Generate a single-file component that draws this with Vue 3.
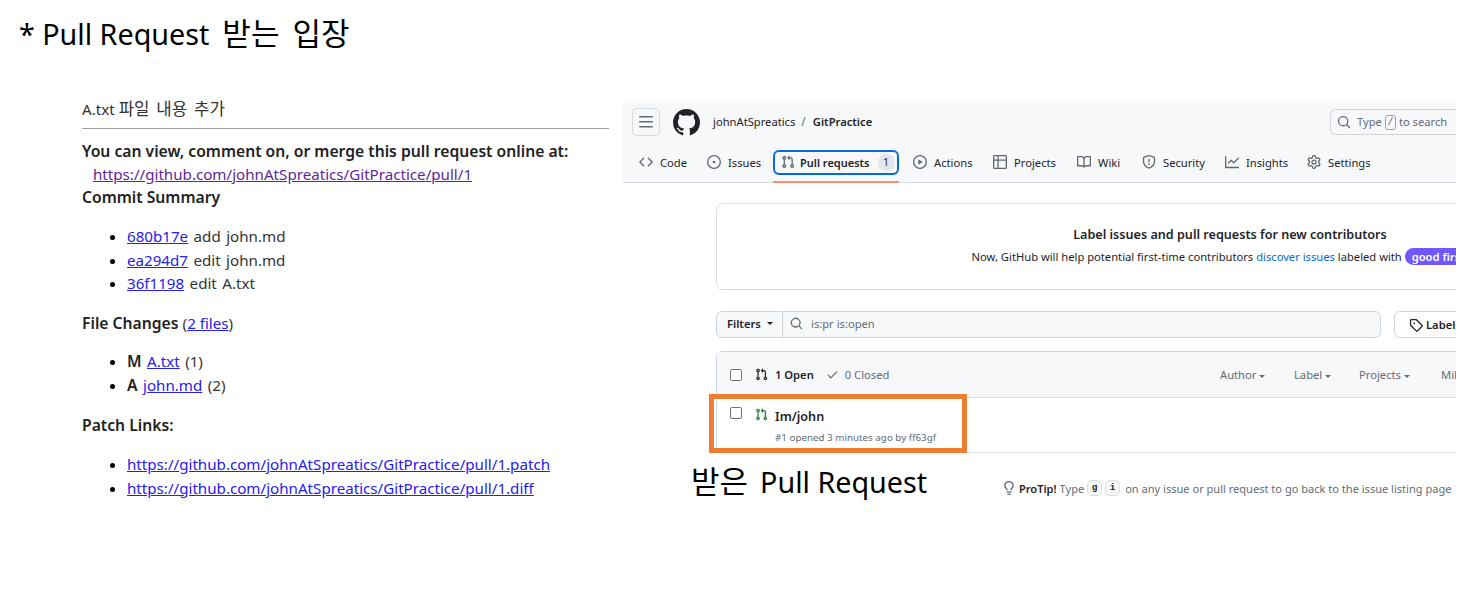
<script setup>
const commits = [
  { sha: '680b17e', msg: 'add john.md' },
  { sha: 'ea294d7', msg: 'edit john.md' },
  { sha: '36f1198', msg: 'edit A.txt' },
]
const files = [
  { s: 'M', name: 'A.txt', n: '(1)' },
  { s: 'A', name: 'john.md', n: '(2)' },
]
const patches = [
  'https://github.com/johnAtSpreatics/GitPractice/pull/1.patch',
  'https://github.com/johnAtSpreatics/GitPractice/pull/1.diff',
]
const prPath = 'M1.5 3.25a2.25 2.25 0 1 1 3 2.122v5.256a2.251 2.251 0 1 1-1.5 0V5.372A2.25 2.25 0 0 1 1.5 3.25Zm5.677-.177L9.573.677A.25.25 0 0 1 10 .854V2.5h1A2.5 2.5 0 0 1 13.5 5v5.628a2.251 2.251 0 1 1-1.5 0V5a1 1 0 0 0-1-1h-1v1.646a.25.25 0 0 1-.427.177L7.177 3.427a.25.25 0 0 1 0-.354ZM3.75 2.5a.75.75 0 1 0 0 1.5.75.75 0 0 0 0-1.5Zm0 9.5a.75.75 0 1 0 0 1.5.75.75 0 0 0 0-1.5Zm8.25.75a.75.75 0 1 0 1.5 0 .75.75 0 0 0-1.5 0Z'
</script>

<template>
  <div class="page">
    <h1 class="title"><span class="latin">* Pull Request</span> 받는 입장</h1>
    <div class="row">
      <section class="mail">
        <div class="subject">A.txt <span class="ko">파일 내용 추가</span></div>
        <p class="strong first">You can view, comment on, or merge this pull request online at:</p>
        <p class="url"><a class="visited">https://github.com/johnAtSpreatics/GitPractice/pull/1</a></p>
        <p class="strong">Commit Summary</p>
        <ul class="list commits">
          <li v-for="c in commits" :key="c.sha"><a>{{ c.sha }}</a> {{ c.msg }}</li>
        </ul>
        <p class="strong">File Changes <span class="normal">(<a>2 files</a>)</span></p>
        <ul class="list changes">
          <li v-for="f in files" :key="f.name"><b class="strong">{{ f.s }}</b> <a>{{ f.name }}</a> {{ f.n }}</li>
        </ul>
        <p class="strong">Patch Links:</p>
        <ul class="list patches">
          <li v-for="p in patches" :key="p"><a>{{ p }}</a></li>
        </ul>
      </section>

      <section class="gh">
        <header class="gh-head">
          <div class="top">
            <span class="burger"><svg width="16" height="16" viewBox="0 0 16 16"><path fill="#636c76" d="M1 2.75A.75.75 0 0 1 1.75 2h12.5a.75.75 0 0 1 0 1.5H1.75A.75.75 0 0 1 1 2.75Zm0 5A.75.75 0 0 1 1.75 7h12.5a.75.75 0 0 1 0 1.5H1.75A.75.75 0 0 1 1 7.75ZM1.75 12h12.5a.75.75 0 0 1 0 1.5H1.75a.75.75 0 0 1 0-1.5Z"/></svg></span>
            <svg class="logo" width="27" height="27" viewBox="0 0 16 16"><path fill="#1f2328" d="M8 0c4.42 0 8 3.58 8 8a8.013 8.013 0 0 1-5.45 7.59c-.4.08-.55-.17-.55-.38 0-.27.01-1.13.01-2.2 0-.75-.25-1.23-.54-1.48 1.78-.2 3.65-.88 3.65-3.95 0-.88-.31-1.59-.82-2.15.08-.2.36-1.02-.08-2.12 0 0-.67-.22-2.2.82-.64-.18-1.32-.27-2-.27-.68 0-1.36.09-2 .27-1.53-1.03-2.2-.82-2.2-.82-.44 1.1-.16 1.92-.08 2.12-.51.56-.82 1.28-.82 2.15 0 3.06 1.86 3.75 3.64 3.95-.23.2-.44.55-.51 1.07-.46.21-1.61.55-2.33-.66-.15-.24-.6-.83-1.23-.82-.67.01-.27.38.01.53.34.19.73.9.82 1.13.16.45.68 1.31 2.69.94 0 .67.01 1.3.01 1.49 0 .21-.15.45-.55.38A7.995 7.995 0 0 1 0 8c0-4.42 3.58-8 8-8Z"/></svg>
            <span class="crumb owner">johnAtSpreatics</span><span class="crumb slash">/</span><b class="crumb repo">GitPractice</b>
            <div class="search">
              <svg width="14" height="14" viewBox="0 0 16 16"><path fill="#636c76" d="M10.68 11.74a6 6 0 0 1-7.922-8.982 6 6 0 0 1 8.982 7.922l3.04 3.04a.749.749 0 1 1-1.06 1.06ZM11.5 7a4.499 4.499 0 1 0-8.997 0A4.499 4.499 0 0 0 11.5 7Z"/></svg>
              <span>Type</span><kbd>/</kbd><span>to search</span>
            </div>
          </div>
          <nav class="tabs">
            <span class="tab t-code"><svg width="14" height="14" viewBox="0 0 16 16"><path d="m11.28 3.22 4.25 4.25a.75.75 0 0 1 0 1.06l-4.25 4.25a.749.749 0 1 1-1.06-1.06L13.94 8l-3.72-3.72a.749.749 0 1 1 1.06-1.06Zm-6.56 0a.751.751 0 0 1 1.06 1.06L2.06 8l3.72 3.72a.749.749 0 1 1-1.06 1.06L.47 8.53a.75.75 0 0 1 0-1.06Z"/></svg>Code</span>
            <span class="tab t-issues"><svg width="14" height="14" viewBox="0 0 16 16"><path d="M8 9.5a1.5 1.5 0 1 0 0-3 1.5 1.5 0 0 0 0 3Z"/><path d="M8 0a8 8 0 1 1 0 16A8 8 0 0 1 8 0ZM1.5 8a6.5 6.5 0 1 0 13 0 6.5 6.5 0 0 0-13 0Z"/></svg>Issues</span>
            <span class="tab-wrap">
              <span class="tab active"><svg width="14" height="14" viewBox="0 0 16 16"><path :d="prPath"/></svg><b>Pull requests</b><i class="count">1</i></span>
            </span>
            <span class="tab t-actions"><svg width="14" height="14" viewBox="0 0 16 16"><path d="M8 0a8 8 0 1 1 0 16A8 8 0 0 1 8 0ZM1.5 8a6.5 6.5 0 1 0 13 0 6.5 6.5 0 0 0-13 0Zm4.879-2.773 4.264 2.559a.25.25 0 0 1 0 .428l-4.264 2.559A.25.25 0 0 1 6 10.559V5.442a.25.25 0 0 1 .379-.215Z"/></svg>Actions</span>
            <span class="tab t-projects"><svg width="14" height="14" viewBox="0 0 16 16"><path d="M0 1.75C0 .784.784 0 1.75 0h12.5C15.216 0 16 .784 16 1.75v12.5A1.75 1.75 0 0 1 14.25 16H1.75A1.75 1.75 0 0 1 0 14.25ZM6.5 6.5v8h7.75a.25.25 0 0 0 .25-.25V6.5Zm8-1.5V1.75a.25.25 0 0 0-.25-.25H6.5V5Zm-13 1.5v7.75c0 .138.112.25.25.25H5v-8ZM5 5V1.5H1.75a.25.25 0 0 0-.25.25V5Z"/></svg>Projects</span>
            <span class="tab t-wiki"><svg width="14" height="14" viewBox="0 0 16 16"><path d="M0 1.75A.75.75 0 0 1 .75 1h4.253c1.227 0 2.317.59 3 1.501A3.743 3.743 0 0 1 11.006 1h4.245a.75.75 0 0 1 .75.75v10.5a.75.75 0 0 1-.75.75h-4.507a2.25 2.25 0 0 0-1.591.659l-.622.621a.75.75 0 0 1-1.06 0l-.622-.621A2.25 2.25 0 0 0 5.258 13H.75a.75.75 0 0 1-.75-.75Zm7.251 10.324.004-5.073-.002-2.253A2.25 2.25 0 0 0 5.003 2.5H1.5v9h3.757a3.75 3.75 0 0 1 1.994.574ZM8.755 4.75l-.004 7.322a3.752 3.752 0 0 1 1.992-.572H14.5v-9h-3.495a2.25 2.25 0 0 0-2.25 2.25Z"/></svg>Wiki</span>
            <span class="tab t-security"><svg width="14" height="14" viewBox="0 0 16 16"><path d="M7.467.133a1.748 1.748 0 0 1 1.066 0l5.25 1.68A1.75 1.75 0 0 1 15 3.48V7c0 1.566-.32 3.182-1.303 4.682-.983 1.498-2.585 2.813-5.032 3.855a1.697 1.697 0 0 1-1.33 0c-2.447-1.042-4.049-2.357-5.032-3.855C1.32 10.182 1 8.566 1 7V3.48a1.75 1.75 0 0 1 1.217-1.667Zm.61 1.429a.25.25 0 0 0-.153 0l-5.25 1.68a.25.25 0 0 0-.174.238V7c0 1.358.275 2.666 1.057 3.86.784 1.194 2.121 2.34 4.366 3.297a.196.196 0 0 0 .154 0c2.245-.956 3.582-2.104 4.366-3.298C13.225 9.666 13.5 8.36 13.5 7V3.48a.251.251 0 0 0-.174-.237l-5.25-1.68ZM8.75 4.75v3a.75.75 0 0 1-1.5 0v-3a.75.75 0 0 1 1.5 0ZM9 10.5a1 1 0 1 1-2 0 1 1 0 0 1 2 0Z"/></svg>Security</span>
            <span class="tab t-insights"><svg width="14" height="14" viewBox="0 0 16 16"><path d="M1.5 1.75V13.5h13.75a.75.75 0 0 1 0 1.5H.75a.75.75 0 0 1-.75-.75V1.75a.75.75 0 0 1 1.5 0Zm14.28 2.53-5.25 5.25a.75.75 0 0 1-1.06 0L7 7.06 4.28 9.78a.751.751 0 0 1-1.06-1.06l3.25-3.25a.75.75 0 0 1 1.06 0L10 7.94l4.72-4.72a.751.751 0 0 1 1.06 1.06Z"/></svg>Insights</span>
            <span class="tab t-settings"><svg width="14" height="14" viewBox="0 0 16 16"><path d="M8 0a8.2 8.2 0 0 1 .701.031C9.444.095 9.99.645 10.16 1.29l.288 1.107c.018.066.079.158.212.224.231.114.454.243.668.386.123.082.233.09.299.071l1.103-.303c.644-.176 1.392.021 1.82.63.27.385.506.792.704 1.218.315.675.111 1.422-.364 1.891l-.814.806c-.049.048-.098.147-.088.294.016.257.016.515 0 .772-.01.147.038.246.088.294l.814.806c.475.469.679 1.216.364 1.891a7.977 7.977 0 0 1-.704 1.217c-.428.61-1.176.807-1.82.63l-1.102-.302c-.067-.019-.177-.011-.3.071a5.909 5.909 0 0 1-.668.386c-.133.066-.194.158-.211.224l-.29 1.106c-.168.646-.715 1.196-1.458 1.26a8.006 8.006 0 0 1-1.402 0c-.743-.064-1.289-.614-1.458-1.26l-.289-1.106c-.018-.066-.079-.158-.212-.224a5.738 5.738 0 0 1-.668-.386c-.123-.082-.233-.09-.299-.071l-1.103.303c-.644.176-1.392-.021-1.82-.63a8.12 8.12 0 0 1-.704-1.218c-.315-.675-.111-1.422.363-1.891l.815-.806c.05-.048.098-.147.088-.294a6.214 6.214 0 0 1 0-.772c.01-.147-.038-.246-.088-.294l-.815-.806C.635 6.045.431 5.298.746 4.623a7.92 7.92 0 0 1 .704-1.217c.428-.61 1.176-.807 1.82-.63l1.102.302c.067.019.177.011.3-.071.214-.143.437-.272.668-.386.133-.066.194-.158.211-.224l.29-1.106C6.009.645 6.556.095 7.299.03 7.53.01 7.764 0 8 0Zm-.571 1.525c-.036.003-.108.036-.137.146l-.289 1.105c-.147.561-.549.967-.998 1.189-.173.086-.34.183-.5.29-.417.278-.97.423-1.529.27l-1.103-.303c-.109-.03-.175.016-.195.045-.22.312-.412.644-.573.99-.014.031-.021.11.059.19l.815.806c.411.406.562.957.53 1.456a4.709 4.709 0 0 0 0 .582c.032.499-.119 1.05-.53 1.456l-.815.806c-.081.08-.073.159-.059.19.162.346.353.677.573.989.02.03.085.076.195.046l1.102-.303c.56-.153 1.113-.008 1.53.27.161.107.328.204.501.29.447.222.85.629.997 1.189l.289 1.105c.029.109.101.143.137.146a6.6 6.6 0 0 0 1.142 0c.036-.003.108-.036.137-.146l.289-1.105c.147-.561.549-.967.998-1.189.173-.086.34-.183.5-.29.417-.278.97-.423 1.529-.27l1.103.303c.109.029.175-.016.195-.045.22-.313.411-.644.573-.99.014-.031.021-.11-.059-.19l-.815-.806c-.411-.406-.562-.957-.53-1.456a4.709 4.709 0 0 0 0-.582c-.032-.499.119-1.05.53-1.456l.815-.806c.081-.08.073-.159.059-.19a6.464 6.464 0 0 0-.573-.989c-.02-.03-.085-.076-.195-.046l-1.102.303c-.56.153-1.113.008-1.53-.27a4.44 4.44 0 0 0-.501-.29c-.447-.222-.85-.629-.997-1.189l-.289-1.105c-.029-.11-.101-.143-.137-.146a6.6 6.6 0 0 0-1.142 0ZM11 8a3 3 0 1 1-6 0 3 3 0 0 1 6 0ZM9.5 8a1.5 1.5 0 1 0-3.001.001A1.5 1.5 0 0 0 9.5 8Z"/></svg>Settings</span>
          </nav>
        </header>

        <div class="gh-body">
          <div class="banner">
            <b>Label issues and pull requests for new contributors</b>
            <p>Now, GitHub will help potential first-time contributors <a>discover issues</a> labeled with <span class="pill">good first issue</span></p>
          </div>

          <div class="filters">
            <span class="filter-btn">Filters<i class="caret"></i></span>
            <div class="filter-input">
              <svg width="13" height="13" viewBox="0 0 16 16"><path fill="#636c76" d="M10.68 11.74a6 6 0 0 1-7.922-8.982 6 6 0 0 1 8.982 7.922l3.04 3.04a.749.749 0 1 1-1.06 1.06ZM11.5 7a4.499 4.499 0 1 0-8.997 0A4.499 4.499 0 0 0 11.5 7Z"/></svg>
              is:pr is:open
            </div>
            <span class="labels"><svg width="14" height="14" viewBox="0 0 16 16"><path fill="#1f2328" d="M1 7.775V2.75C1 1.784 1.784 1 2.75 1h5.025c.464 0 .91.184 1.238.513l6.25 6.25a1.75 1.75 0 0 1 0 2.474l-5.026 5.026a1.75 1.75 0 0 1-2.474 0l-6.25-6.25A1.752 1.752 0 0 1 1 7.775Zm1.5 0c0 .066.026.13.073.177l6.25 6.25a.25.25 0 0 0 .354 0l5.025-5.025a.25.25 0 0 0 0-.354l-6.25-6.25a.25.25 0 0 0-.177-.073H2.75a.25.25 0 0 0-.25.25ZM6 5a1 1 0 1 1 0 2 1 1 0 0 1 0-2Z"/></svg>Labels</span>
          </div>

          <div class="issues">
            <div class="issues-head">
              <i class="check"></i>
              <svg class="pr-ico" width="13" height="13" viewBox="0 0 16 16"><path fill="#1f2328" :d="prPath"/></svg>
              <b class="open">1 Open</b>
              <svg class="tick" width="13" height="13" viewBox="0 0 16 16"><path fill="#636c76" d="M13.78 4.22a.75.75 0 0 1 0 1.06l-7.25 7.25a.75.75 0 0 1-1.06 0L2.22 9.28a.751.751 0 0 1 1.06-1.06L6 10.94l6.72-6.72a.75.75 0 0 1 1.06 0Z"/></svg>
              <span class="closed">0 Closed</span>
              <span class="menus">
                <span class="m-author">Author<i class="caret"></i></span>
                <span class="m-label">Label<i class="caret"></i></span>
                <span class="m-projects">Projects<i class="caret"></i></span>
                <span>Milestones</span>
              </span>
            </div>
            <div class="issue">
              <i class="check"></i>
              <svg class="pr-ico" width="13" height="13" viewBox="0 0 16 16"><path fill="#1a7f37" :d="prPath"/></svg>
              <div class="issue-text">
                <b>Im/john</b>
                <small>#1 opened 3 minutes ago by ff63gf</small>
              </div>
            </div>
          </div>

          <div class="protip">
            <svg width="14" height="14" viewBox="0 0 16 16"><path fill="#636c76" d="M8 1.5c-2.363 0-4 1.69-4 3.75 0 .984.424 1.625.984 2.304l.214.253c.223.264.47.556.673.848.284.411.537.896.621 1.49a.75.75 0 0 1-1.484.211c-.04-.282-.163-.547-.37-.847a8.456 8.456 0 0 0-.542-.68c-.084-.1-.173-.205-.268-.32C3.201 7.75 2.5 6.766 2.5 5.25 2.5 2.31 4.863 0 8 0s5.5 2.31 5.5 5.25c0 1.516-.701 2.5-1.328 3.259-.095.115-.184.22-.268.319-.207.245-.383.453-.541.681-.208.3-.33.565-.37.847a.751.751 0 0 1-1.485-.212c.084-.593.337-1.078.621-1.489.203-.292.45-.584.673-.848.075-.088.147-.173.213-.253.561-.679.985-1.32.985-2.304 0-2.06-1.637-3.75-4-3.75ZM5.75 12h4.5a.75.75 0 0 1 0 1.5h-4.5a.75.75 0 0 1 0-1.5ZM6 15.25a.75.75 0 0 1 .75-.75h2.5a.75.75 0 0 1 0 1.5h-2.5a.75.75 0 0 1-.75-.75Z"/></svg>
            <b>ProTip!</b><span>Type</span><kbd>g</kbd><kbd>i</kbd><span class="tip-end">on any issue or pull request to go back to the issue listing page</span>
          </div>
        </div>
      </section>
    </div>

    <div class="callout-box"></div>
    <div class="callout-text">받은 <span class="latin">Pull Request</span></div>
  </div>
</template>

<style>
html, body { margin: 0; background: #fff; }
</style>

<style scoped>
.page {
  position: relative;
  width: 1477px;
  height: 602px;
  overflow: hidden;
  background: #fff;
  font-family: "Noto Sans", "Noto Sans CJK KR", sans-serif;
}
.title {
  margin: 0;
  height: 100px;
  box-sizing: border-box;
  padding: 11px 0 0 19px;
  font-weight: 400;
  font-size: 31px;
  line-height: 44px;
  word-spacing: 5px;
  color: #000;
}
.latin { font-size: 28.7px; word-spacing: 0; }
.row { display: flex; padding-left: 82px; }

/* mail */
.mail { width: 527px; margin-right: 14px; font-size: 15.15px; color: #333; flex: none; }
.subject { height: 28px; line-height: 18px; border-bottom: 1px solid #a0a0a0; margin-bottom: 11px; }
.ko { font-size: 16.8px; word-spacing: 2.5px; }
.mail p { margin: 0; height: 23px; line-height: 23px; white-space: nowrap; }
.strong { font-weight: 600; color: #222; font-size: 15.7px; }
.normal { font-weight: 400; color: #333; font-size: 15.15px; }
.url { padding-left: 11px; }
.mail a { color: #2620ee; text-decoration: underline; }
.mail a.visited { color: #60279c; }
.list { padding: 0 0 0 45px; word-spacing: 1.5px; }
.commits { margin: 16px 0 16px; }
.changes { margin: 15px 0 17px; }
.patches { margin: 15.5px 0 0; }
.list li { height: 23.7px; line-height: 23.7px; white-space: nowrap; }
.list li::marker { color: #000; }

/* github */
.gh { width: 833px; flex: none; overflow: hidden; font-size: 11.2px; color: #1f2328; }
.gh-head { height: 82px; background: #f6f8fa; border-bottom: 1px solid #d8dee4; position: relative; }
.top { height: 44px; display: flex; align-items: center; padding: 0 0 0 9px; }
.burger { width: 26px; height: 26px; border: 1px solid #d5dae0; border-radius: 5px; display: flex; align-items: center; justify-content: center; }
.logo { margin-left: 13px; margin-right: 13px; }
.crumb { padding-bottom: 2px; }
.slash { margin: 0 7px 0 6px; color: #636c76; font-size: 12px; }
.repo { font-weight: 600; }
.search {
  margin-left: auto; width: 126px; height: 26px; box-sizing: border-box;
  border: 1px solid #d0d7de; border-right: 0; border-radius: 6px 0 0 6px;
  display: flex; align-items: center; gap: 3px; padding-left: 6px; color: #636c76;
}
.search span { padding-bottom: 2px; }
.search svg { margin-right: 3px; }
kbd { font-family: "Liberation Mono", monospace; }
.search kbd { border: 1px solid #9aa3ac; border-radius: 3px; width: 9px; height: 13px; font-size: 10px; line-height: 13px; text-align: center; }
.tabs { display: flex; align-items: center; height: 38px; box-sizing: border-box; padding: 0 0 2px 16px; color: #1f2328; }
.tab { display: inline-flex; align-items: center; gap: 7px; white-space: nowrap; }
.tab svg { fill: #5f6873; flex: none; }
.t-code { width: 68px; }
.t-issues { width: 66px; }
.tab-wrap { position: relative; width: 140px; height: 36px; display: flex; align-items: center; }
.tab-wrap::after { content: ""; position: absolute; left: 0; right: 14px; bottom: -3px; height: 2px; background: #fd8c73; }
.tab.active { width: 126px; height: 25px; box-sizing: border-box; border: 2px solid #0969da; border-radius: 6px; padding-left: 6px; gap: 5px; }
.tab.active b { font-weight: 600; font-size: 11px; }
.count { width: 17px; height: 17px; margin-left: 3px; background: #e3e7eb; border-radius: 50%; font-style: normal; font-size: 10.5px; line-height: 17px; text-align: center; }
.t-actions { width: 80px; }
.t-projects { width: 84px; }
.t-wiki { width: 65px; }
.t-security { width: 83px; }
.t-insights { width: 82px; }

.gh-body { padding: 20px 0 0 93px; width: 1200px; box-sizing: border-box; }
.banner {
  width: 1028px; height: 87px; box-sizing: border-box;
  border: 1px solid #d8dee4; border-radius: 6px;
  text-align: center; padding-top: 20px; white-space: nowrap;
}
.banner b { display: block; font-weight: 600; font-size: 12.6px; line-height: 22px; }
.banner p { margin: 0; line-height: 22px; }
.banner a { color: #0969da; }
.pill { background: #7057ff; color: #fff; border-radius: 9px; padding: 1px 7px; font-weight: 600; margin-right: -14px; }
.filters { display: flex; margin-top: 21px; height: 27px; }
.filter-btn {
  width: 67px; box-sizing: border-box; border: 1px solid #d0d7de; border-radius: 6px 0 0 6px;
  background: #f6f8fa; font-weight: 600; display: flex; align-items: center; gap: 3px; padding: 0 0 2px 10px;
}
.caret { display: inline-block; border: 3.5px solid transparent; border-top-color: currentColor; border-bottom: 0; margin-left: 3px; }
.filter-input {
  width: 598px; box-sizing: border-box; background: #f6f8fa; border: 1px solid #d0d7de; border-left: 0;
  border-radius: 0 6px 6px 0; display: flex; align-items: center; gap: 8px; padding: 0 0 2px 7px; color: #636c76;
}
.labels {
  margin-left: 13px; width: 140px; box-sizing: border-box; border: 1px solid #d0d7de; border-radius: 6px;
  display: flex; align-items: center; gap: 3px; padding-left: 14px; font-weight: 600;
}
.issues { margin-top: 13px; width: 1028px; box-sizing: border-box; border-top: 1px solid #d0d7de; border-left: 1px solid #d0d7de; border-bottom: 1px solid #d8dee4; border-radius: 6px 0 0 0; }
.issues-head { height: 45px; background: #f6f8fa; display: flex; align-items: center; border-bottom: 1px solid #d8dee4; padding-left: 13px; position: relative; }
.check { width: 10px; height: 10px; border: 1px solid #6e7781; border-radius: 2px; background: #fff; flex: none; }
.pr-ico { margin-left: 13px; }
.open { margin-left: 7px; font-weight: 600; padding-bottom: 1px; }
.tick { margin-left: 12px; }
.closed { margin-left: 6px; color: #636c76; padding-bottom: 1px; }
.menus { position: absolute; left: 503px; display: flex; color: #636c76; white-space: nowrap; padding-bottom: 1px; }
.m-author { width: 74px; }
.m-label { width: 65px; }
.m-projects { width: 82px; }
.menus .caret { margin-left: 3px; vertical-align: 1px; }
.issue { height: 54px; display: flex; align-items: flex-start; padding: 9px 0 0 13px; box-sizing: border-box; }
.issue-text { margin: 2px 0 0 7px; display: flex; flex-direction: column; }
.issue-text b { font-weight: 600; font-size: 12.6px; line-height: 16px; }
.issue-text small { font-size: 9.8px; line-height: 14px; margin-top: 6px; color: #636c76; }
.issue .pr-ico { margin-top: 1px; }
.protip { margin: 26px 0 0 286px; display: flex; align-items: center; gap: 3px; white-space: nowrap; color: #636c76; height: 18px; font-size: 11.05px; }
.protip b { color: #1f2328; font-weight: 600; }
.protip kbd { border: 1px solid #d8dee4; border-radius: 5px; background: #f6f8fa; width: 13px; height: 14px; line-height: 14px; font-size: 9.5px; text-align: center; color: #1f2328; font-weight: 700; }
.tip-end { margin-left: 2px; }

/* overlays */
.callout-box { position: absolute; left: 709px; top: 394px; width: 258px; height: 59px; box-sizing: border-box; border: 5px solid #ed7d31; }
.callout-text { position: absolute; left: 691px; top: 459px; font-size: 31px; line-height: 44px; word-spacing: 4px; color: #000; white-space: nowrap; }
</style>
